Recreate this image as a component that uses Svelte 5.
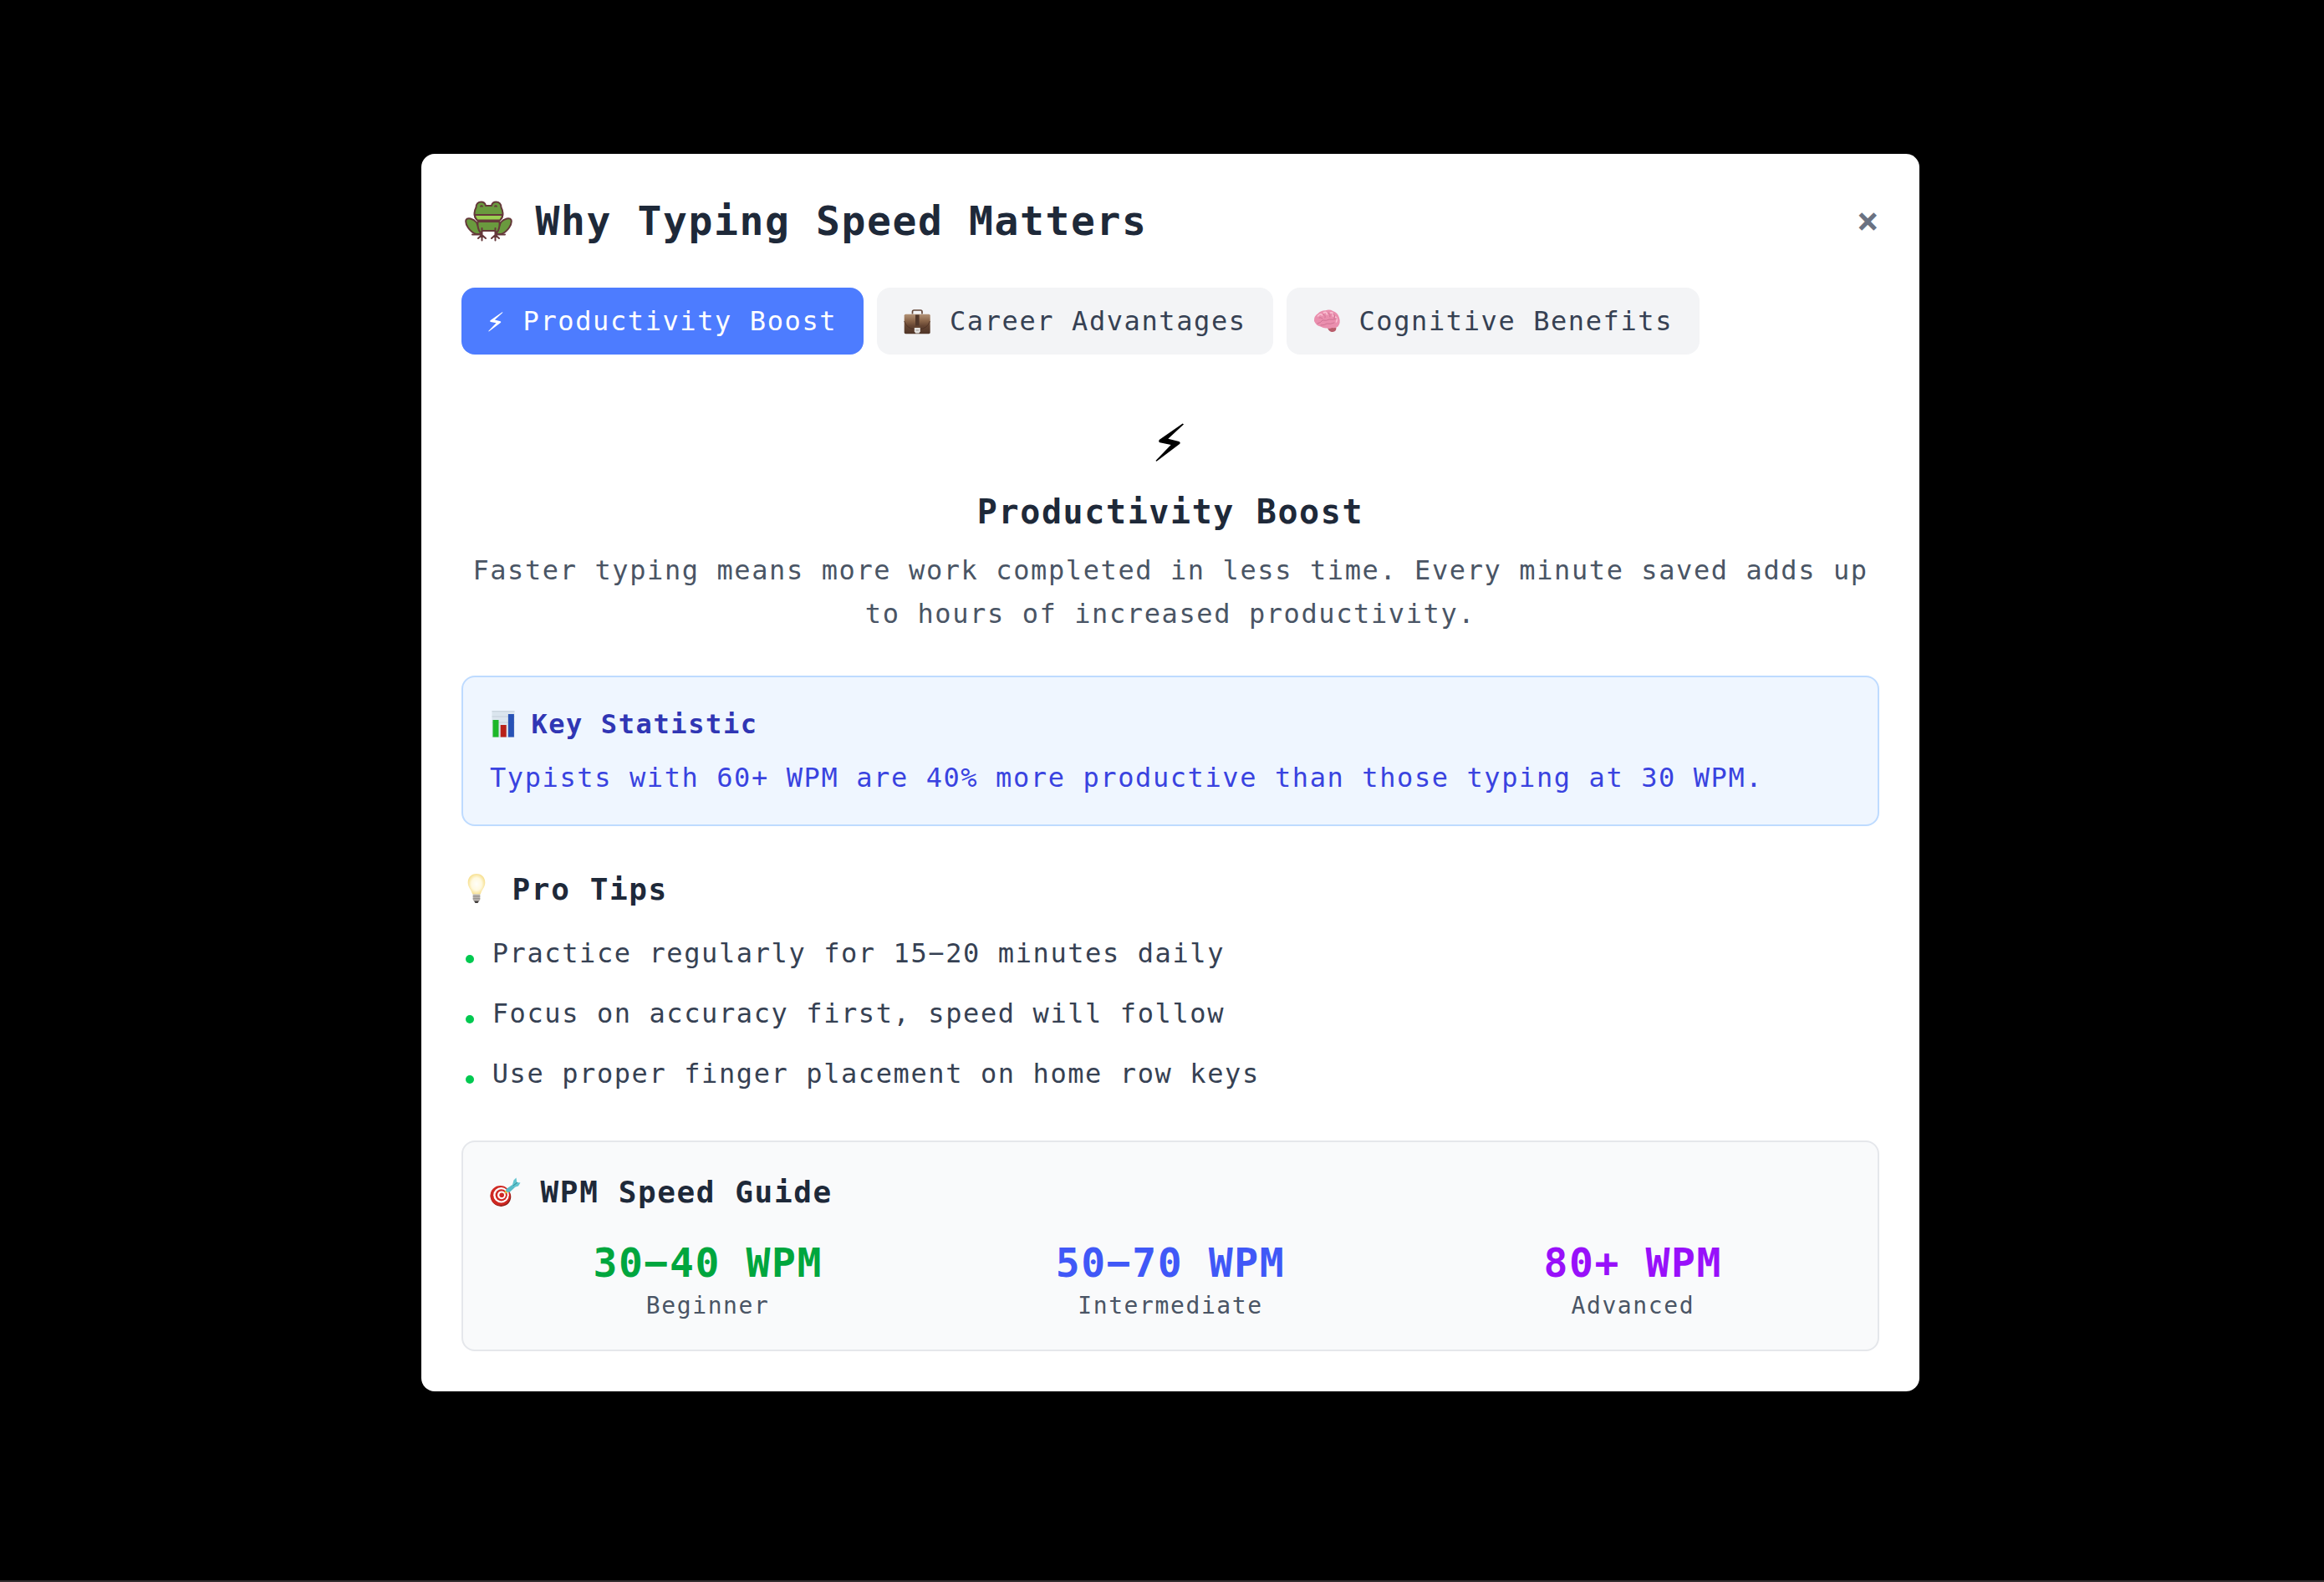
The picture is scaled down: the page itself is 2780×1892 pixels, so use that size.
<script>
  const tabs = [
    { icon: 'bolt', label: 'Productivity Boost' },
    { icon: 'case', label: 'Career Advantages' },
    { icon: 'brain', label: 'Cognitive Benefits' }
  ];
  let active = $state(0);
  const tips = [
    'Practice regularly for 15−20 minutes daily',
    'Focus on accuracy first, speed will follow',
    'Use proper finger placement on home row keys'
  ];
  const levels = [
    { speed: '30−40 WPM', name: 'Beginner', tone: 'green' },
    { speed: '50−70 WPM', name: 'Intermediate', tone: 'blue' },
    { speed: '80+ WPM', name: 'Advanced', tone: 'purple' }
  ];
</script>

{#snippet bolt()}
  <path d="M33.6 0.4 L35 1.3 L15.8 19.2 L29.2 22.4 Q31.2 23.2 30.2 25.4 L1.6 47 L0.4 46.2 L19.2 26.6 L5.6 23.8 Q3.6 23 4.8 20.4 Z" fill="currentColor" />
{/snippet}

<div class="page">
  <section class="modal">
    <header>
      <h1>
        <svg class="frog" viewBox="0 0 57 49">
          <g fill="#6a9a3e" stroke="#65383a" stroke-width="2" stroke-linejoin="round" stroke-linecap="round">
            <path d="M14 26C10 21 3 20 1.500 23c-1.500 5 4 14 12 17h6z" />
            <path d="M43 26c4-5 11-6 12.500-3 1.500 5-4 14-12 17h-6z" />
            <path d="M15.500 25c-.5 6 0 9 3 13l3-2h14l3 2c3-4 3.500-7 3-13z" />
            <path d="M11.500 15c0-3 1-5 2-7C13.500 4 16 1.500 19.500 1.500c3 0 5 2 5.500 4.500h7c.5-2.500 2.500-4.500 5.500-4.500 3.500 0 6 2.500 6 6.500 1 2 2 4 2 7 0 6.500-4 10-9 10h-16c-5 0-9-3.500-9-10z" />
            <path d="M11.700 17h33.600c-.5 3-1.500 5-3.300 6.500H15c-1.800-1.500-2.800-3.500-3.300-6.500z" fill="#9bd052" />
            <path d="M20.500 33v9M36.500 33v9M20.500 41l-4.500 4M20.500 42v5.500M20.500 41l4.500 4M36.500 41l4.500 4M36.500 42v5.500M36.500 41l-4.500 4M9 40.500h10M38 40.500h10" fill="none" />
          </g>
          <path d="M18 7.500c0-3 4-3 4 0zM35 7.500c0-3 4-3 4 0z" fill="#65383a" />
        </svg>
        Why Typing Speed Matters
      </h1>
      <button class="close" aria-label="Close">×</button>
    </header>

    <nav>
      {#each tabs as tab, i}
        <button class="tab" class:active={active === i} onclick={() => (active = i)}>
          {#if tab.icon === 'bolt'}
            <svg class="small-bolt" viewBox="0 0 36 48">{@render bolt()}</svg>
          {:else if tab.icon === 'case'}
            <svg class="tab-icon" viewBox="0 0 34 34">
              <defs>
                <linearGradient id="leather" x1="0" y1="0" x2="0" y2="1">
                  <stop offset="0" stop-color="#b39377" />
                  <stop offset=".35" stop-color="#8a6549" />
                  <stop offset=".6" stop-color="#654532" />
                  <stop offset="1" stop-color="#4f3528" />
                </linearGradient>
              </defs>
              <path d="M10.500 8.500V5.700Q10.500 4 12.300 4h7.900Q22 4 22 5.700V8.500" fill="none" stroke="#65483a" stroke-width="1.700" />
              <rect x=".7" y="8.700" width="31" height="23.500" rx="1.600" fill="url(#leather)" />
              <path d="M.7 17Q4 26.500 13 26.500h6q9 0 12.500-9.500" fill="none" stroke="#4b3024" stroke-width=".8" />
              <rect x="14" y="9.500" width="4.600" height="13" fill="#51372a" />
              <path d="M12.800 25h7v4.500l-1.500 2h-4l-1.500-2z" fill="#e5e3e0" />
              <path d="M14.500 28h3.500" stroke="#99938f" stroke-width="1" />
            </svg>
          {:else}
            <svg class="tab-icon" viewBox="0 0 34 34">
              <path d="M17 24.500q1 4 3.500 5 4 1.500 6.500-1.500l.5-3.500z" fill="#b95c6b" />
              <path d="M1 17Q.5 11 5.500 8q4-4 9-3.700Q19.500 2.500 23.500 5q6 2 7.500 8 2 6-1.500 10.500-3 2.500-7 1.500-3 1.500-6 .5-4 .5-8-2-5-1-7.500-6.500z" fill="#ea8fae" />
              <g fill="none" stroke-linecap="round">
                <path d="M5.500 11q4-4 5-1M12.500 7q3-2 4 2M20.500 7q4-1 3 4M26.500 12q3 2 1 6" stroke="#f9c0d2" stroke-width="1.600" />
                <path d="M5 20q4-1 6-4 5 1 8-1 5 1 9-1M9 22q5 0 7-2 5 1 9-1M7 13q2-1 4 1M12 9q3 1 2 4M18 7q3 2 2 5M24 8q3 3 1 6" stroke="#cc6f90" stroke-width=".9" />
              </g>
            </svg>
          {/if}
          <span>{tab.label}</span>
        </button>
      {/each}
    </nav>

    <div class="intro">
      <svg class="big-bolt" viewBox="0 0 36 48">{@render bolt()}</svg>
      <h2>Productivity Boost</h2>
      <p>Faster typing means more work completed in less time. Every minute saved adds up to hours of increased productivity.</p>
    </div>

    <div class="stat">
      <h3>
        <svg class="chart" viewBox="0 0 32 36">
          <rect x="2.500" y="2" width="27" height="32" fill="#dbe5ee" />
          <path d="M2.500 2.800h27M2.500 9h27M2.500 16h27" stroke="#c5d0da" stroke-width="1" />
          <rect x="3.500" y="13" width="7" height="20.500" fill="#1db729" />
          <rect x="12.700" y="19" width="7" height="14.500" fill="#b82119" />
          <rect x="21.900" y="6" width="7" height="27.500" fill="#2852b5" />
        </svg>
        Key Statistic
      </h3>
      <p>Typists with 60+ WPM are 40% more productive than those typing at 30 WPM.</p>
    </div>

    <div class="tips">
      <h3>
        <svg class="icon-lg" viewBox="0 0 37 40">
          <defs>
            <radialGradient id="glow">
              <stop offset="0" stop-color="#fffef8" />
              <stop offset=".6" stop-color="#fff9df" />
              <stop offset="1" stop-color="#f7e193" />
            </radialGradient>
          </defs>
          <path d="M18 1C11.500 1 7.700 5.500 7.700 11.500c0 5.500 4 8.500 5.500 14h9.600c1.500-5.500 5.500-8.500 5.500-14C28.300 5.500 24.500 1 18 1z" fill="url(#glow)" />
          <path d="M13.700 25.500h8.600v6q0 2-2 2.500h-4.600q-2-.5-2-2.500z" fill="#bcb7b2" />
          <path d="M13.700 28h8.600M13.700 30.800h8.600" stroke="#8b8682" stroke-width="1" />
          <path d="M15 33.500h6l-1.500 2.500h-3z" fill="#3f3c3b" />
        </svg>
        Pro Tips
      </h3>
      <ul>
        {#each tips as tip}
          <li><i></i><span>{tip}</span></li>
        {/each}
      </ul>
    </div>

    <div class="guide">
      <h3>
        <svg class="icon-lg" viewBox="0 0 37 40">
          <ellipse cx="13" cy="25" rx="12.300" ry="11.800" transform="rotate(20 13 25)" fill="#8f1d18" />
          <ellipse cx="12.500" cy="23.800" rx="12" ry="11.800" fill="#cf2822" />
          <ellipse cx="13.500" cy="23.300" rx="9.300" ry="9.200" fill="#fff" />
          <ellipse cx="13.700" cy="23.300" rx="7.100" ry="7.100" fill="#cf2822" />
          <ellipse cx="14" cy="23.300" rx="4.900" ry="4.900" fill="#fff" />
          <ellipse cx="14.200" cy="23.300" rx="2.800" ry="2.800" fill="#cf2822" />
          <path d="M18.500 20.500l1-4.500 8-5.500 3 3-6.500 6z" fill="#58bcc9" />
          <path d="M27 11l1.500-5.500 3-3 .8 5.500 4.200.5-2.500 4-5 1.500z" fill="#62c5d0" />
          <path d="M28 12l5-4" stroke="#2b8994" stroke-width="1" />
          <path d="M17.500 21.500l1-4 3 3z" fill="#e8bd35" />
        </svg>
        WPM Speed Guide
      </h3>
      <div class="levels">
        {#each levels as level}
          <div class="level">
            <strong class={level.tone}>{level.speed}</strong>
            <span>{level.name}</span>
          </div>
        {/each}
      </div>
    </div>
  </section>
</div>

<style>
  :global(body) {
    background: #000;
  }
  .page {
    box-sizing: border-box;
    width: 2780px;
    height: 1892px;
    padding: 184px 484px 0 504px;
    background: #000;
    border-bottom: 2px solid #352f31;
    font-family: 'DejaVu Sans Mono', monospace;
    font-size: 32px;
    line-height: 48px;
    letter-spacing: 1.6px;
    color: #364153;
  }
  .modal {
    box-sizing: border-box;
    width: 1792px;
    height: 1480px;
    padding: 48px;
    background: #fff;
    border-radius: 16px;
  }
  h1, h2, h3, p, ul {
    margin: 0;
    padding: 0;
  }
  svg {
    display: block;
    flex: none;
  }
  button {
    border: 0;
    background: none;
    font: inherit;
    letter-spacing: inherit;
    color: inherit;
    padding: 0;
  }
  header {
    display: flex;
    justify-content: space-between;
    align-items: center;
    height: 64px;
    margin-bottom: 48px;
  }
  h1 {
    display: flex;
    align-items: center;
    gap: 27.5px;
    font-size: 48px;
    line-height: 64px;
    color: #1e2939;
  }
  .frog {
    width: 57px;
    height: 49px;
    margin-left: 4px;
  }
  .close {
    font-size: 44px;
    font-weight: 700;
    line-height: 56px;
    margin-right: -1px;
    color: #6a7282;
  }
  nav {
    display: flex;
    gap: 16px;
    margin-bottom: 48px;
  }
  .tab {
    display: flex;
    align-items: center;
    gap: 20.8px;
    height: 80px;
    padding: 0 32px;
    border-radius: 16px;
    background: #f3f4f6;
    white-space: nowrap;
  }
  .tab.active {
    background: #4d7cff;
    color: #fff;
  }
  .small-bolt {
    width: 18px;
    height: 24px;
    margin: 1px 2.6px 0 0.2px;
  }
  .tab-icon {
    width: 34px;
    height: 34px;
  }
  .intro {
    display: flex;
    flex-direction: column;
    align-items: center;
    text-align: center;
    margin-bottom: 48px;
  }
  .big-bolt {
    width: 35px;
    height: 47px;
    margin: 34px 2px 31px 0;
    color: #000;
  }
  h2 {
    font-size: 40px;
    line-height: 56px;
    margin-bottom: 16px;
    color: #1e2939;
  }
  .intro p {
    line-height: 52px;
    color: #4a5565;
  }
  .stat, .guide {
    box-sizing: border-box;
    padding: 32px;
    border: 2px solid #bedbff;
    border-radius: 16px;
    background: #eff6ff;
  }
  .stat {
    margin-bottom: 48px;
    color: #3943e0;
  }
  h3 {
    display: flex;
    align-items: center;
  }
  .stat h3 {
    gap: 17.4px;
    font-size: 32px;
    margin-bottom: 16px;
    color: #3036b4;
  }
  .chart {
    width: 32px;
    height: 36px;
  }
  .tips h3, .guide h3 {
    gap: 23.6px;
    font-size: 36px;
    line-height: 56px;
    margin-bottom: 24px;
    color: #1e2939;
  }
  .icon-lg {
    width: 37px;
    height: 40px;
  }
  ul {
    display: flex;
    flex-direction: column;
    gap: 24px;
    list-style: none;
    margin-bottom: 56px;
  }
  li {
    display: flex;
    align-items: center;
    gap: 22px;
  }
  li i {
    width: 10px;
    height: 10px;
    margin: 13px 0 0 4.7px;
    border-radius: 50%;
    background: #00c950;
  }
  .guide {
    border-color: #e5e7eb;
    background: #f9fafb;
  }
  .levels {
    display: grid;
    grid-template-columns: repeat(3, 1fr);
    gap: 32px;
  }
  .level {
    display: flex;
    flex-direction: column;
    align-items: center;
  }
  .level strong {
    font-size: 48px;
    line-height: 64px;
  }
  .level span {
    font-size: 28px;
    line-height: 40px;
    color: #4a5565;
  }
  .green { color: #00a63e; }
  .blue { color: #4058f7; }
  .purple { color: #9810fa; }
</style>
